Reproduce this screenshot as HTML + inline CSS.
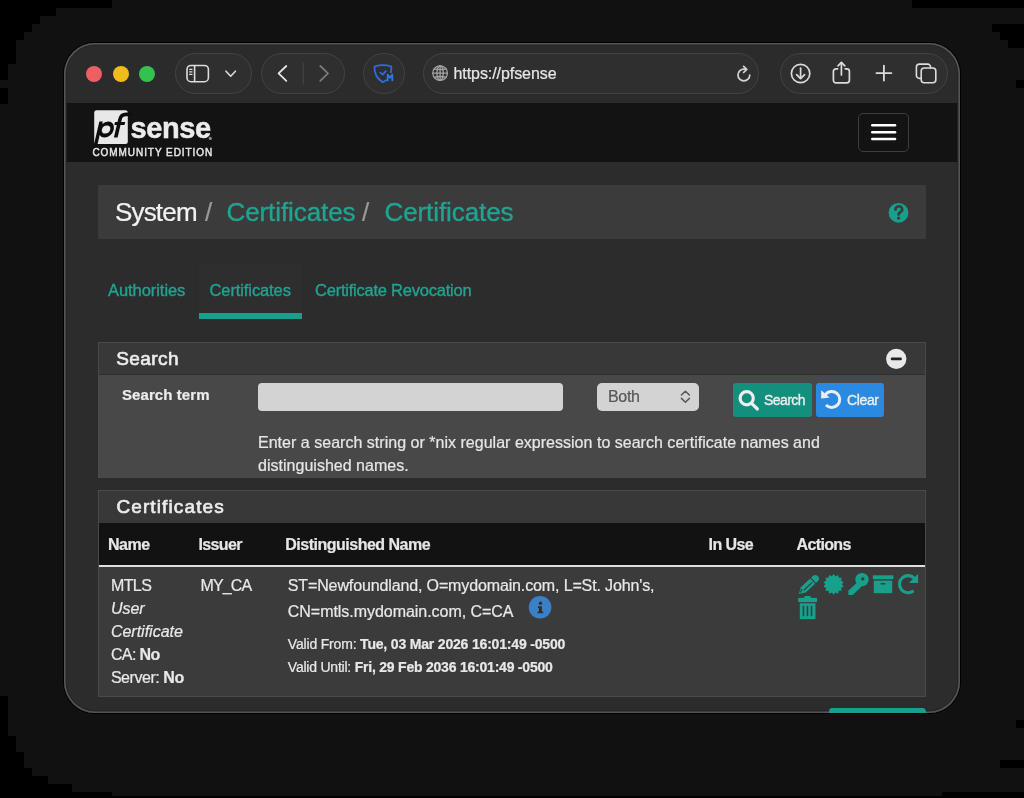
<!DOCTYPE html>
<html><head><meta charset="utf-8">
<style>
*{margin:0;padding:0;box-sizing:border-box}
html,body{width:1024px;height:798px;overflow:hidden;background:#111;font-family:"Liberation Sans",sans-serif}
.blk{position:absolute;background:#000}
#win{position:absolute;left:64px;top:43px;width:896px;height:670px;border-radius:31px;overflow:hidden;background:#2c2c2c}
#winborder{position:absolute;left:64px;top:43px;width:896px;height:670px;border-radius:31px;box-shadow:inset 0 0 0 1.6px #555,inset 0 0 0 2.8px #262626,0 0 0 1px #000;pointer-events:none}
.r{position:absolute}
.t{position:absolute;white-space:nowrap;line-height:1;-webkit-text-stroke:0.22px currentColor}
.pill{position:absolute;top:53px;height:41px;border-radius:21px;border:1px solid #434343;background:#2f2f2f}
.dot{position:absolute;top:65.5px;width:16.4px;height:16.4px;border-radius:50%}
.teal{color:#20a492;-webkit-text-stroke:0.35px #20a492}
.wt{color:#e8e8e8}
svg{position:absolute;left:0;top:0;overflow:visible}
</style></head><body>
<!-- background shadow blocks -->
<div class="blk" style="left:0;top:0;width:112px;height:8px"></div>
<div class="blk" style="left:0;top:8px;width:56px;height:8px"></div>
<div class="blk" style="left:0;top:16px;width:40px;height:8px"></div>
<div class="blk" style="left:0;top:24px;width:32px;height:8px"></div>
<div class="blk" style="left:0;top:32px;width:24px;height:8px"></div>
<div class="blk" style="left:0;top:40px;width:16px;height:24px"></div>
<div class="blk" style="left:0;top:64px;width:8px;height:16px"></div>
<div class="blk" style="left:0;top:88px;width:8px;height:16px"></div>
<div class="blk" style="left:912px;top:0;width:112px;height:8px"></div>
<div class="blk" style="left:992px;top:24px;width:32px;height:8px"></div>
<div class="blk" style="left:1000px;top:32px;width:24px;height:8px"></div>
<div class="blk" style="left:1008px;top:40px;width:16px;height:8px"></div>
<div class="blk" style="left:1016px;top:80px;width:8px;height:8px"></div>
<div class="blk" style="left:0;top:696px;width:8px;height:102px"></div>
<div class="blk" style="left:8px;top:736px;width:8px;height:62px"></div>
<div class="blk" style="left:16px;top:752px;width:8px;height:46px"></div>
<div class="blk" style="left:24px;top:768px;width:8px;height:30px"></div>
<div class="blk" style="left:32px;top:776px;width:16px;height:22px"></div>
<div class="blk" style="left:48px;top:784px;width:24px;height:14px"></div>
<div class="blk" style="left:72px;top:792px;width:40px;height:6px"></div>
<div class="blk" style="left:112px;top:796px;width:830px;height:2px"></div>
<div class="blk" style="left:942px;top:792px;width:82px;height:6px"></div>
<div class="blk" style="left:1016px;top:720px;width:8px;height:8px"></div>
<div class="blk" style="left:1000px;top:760px;width:24px;height:8px"></div>

<div id="win"></div>
<!-- everything below in absolute page coords, clipped by clip container -->
<div style="position:absolute;left:64px;top:43px;width:896px;height:670px;border-radius:31px;overflow:hidden">
<div style="position:absolute;left:-64px;top:-43px;width:1024px;height:798px;will-change:transform">
  <!-- toolbar -->
  <div class="r" style="left:64px;top:43px;width:896px;height:60px;background:#2b2b2b"></div>
  <div class="dot" style="left:86px;background:#ed5f61"></div>
  <div class="dot" style="left:112.6px;background:#efbb1d"></div>
  <div class="dot" style="left:139.1px;background:#34c14f"></div>
  <div class="pill" style="left:175px;width:77px"></div>
  <div class="pill" style="left:261px;width:84px"></div>
  <div class="pill" style="left:363px;width:42px"></div>
  <div class="pill" style="left:423px;width:336px"></div>
  <div class="pill" style="left:780px;width:168px"></div>
  <div class="t" style="left:453.5px;top:65.7px;font-size:16px;color:#e6e6e6;letter-spacing:-0.07px">https://pfsense</div>

  <!-- navbar -->
  <div class="r" style="left:64px;top:103px;width:896px;height:59px;background:#131313"></div>

  <svg width="1024" height="798" style="left:0;top:0">
   <rect x="94.2" y="110.3" width="33.6" height="33.6" rx="2.5" fill="#e8e8e8"/>
   <g transform="translate(0,137.6) skewX(-13) translate(0,-137.6)" fill="#0d0d0d">
    <path fill-rule="evenodd" d="M95.6 121.4 H99.1 V124 A7.4 8.1 0 1 1 99.1 135 V148 H95.6 Z M104.2 125.4 A4.2 4.1 0 1 0 104.2 133.6 A4.2 4.1 0 1 0 104.2 125.4 Z"/>
    <path d="M113.9 137.6 V119 Q113.9 112.6 120.5 112.6 H126 V116.2 H121 Q117.6 116.2 117.6 119.5 V137.6 Z"/>
    <path d="M111.4 121.9 H121.6 V125 H111.4 Z"/>
   </g>
   <circle cx="210.3" cy="138.4" r="1.6" fill="#888"/>
  </svg>
  <div class="t" style="left:130.6px;top:113.65px;font-size:29px;font-weight:bold;color:#ececec;letter-spacing:-0.4px;-webkit-text-stroke:0.5px #ececec;transform:scaleY(1.04);transform-origin:0 24.55px">sense</div>
  <div class="t" style="left:92.4px;top:148px;font-size:10px;color:#e6e6e6;letter-spacing:0.94px;-webkit-text-stroke:0.45px #e6e6e6;transform:scaleY(1.1);transform-origin:0 8.465px">COMMUNITY EDITION</div>
  <div class="r" style="left:858px;top:113px;width:51px;height:39px;border:1px solid #3d3d3d;border-radius:5px"></div>

  <!-- page -->
  <div class="r" style="left:64px;top:162px;width:896px;height:560px;background:#2c2c2c"></div>
  <div class="r" style="left:98px;top:185px;width:828px;height:54px;background:#3b3b3b"></div>
  <div class="t" style="left:115px;top:198.7px;font-size:26px;color:#f2f2f2;letter-spacing:-0.83px">System</div>
  <div class="t" style="left:205px;top:198.7px;font-size:26px;color:#9a9a9a">/</div>
  <div class="t teal" style="left:226.5px;top:198.7px;font-size:26px;letter-spacing:-0.09px">Certificates</div>
  <div class="t" style="left:362px;top:198.7px;font-size:26px;color:#9a9a9a">/</div>
  <div class="t teal" style="left:384.5px;top:198.7px;font-size:26px;letter-spacing:-0.09px">Certificates</div>


  <svg width="1024" height="798" style="left:0;top:0">
   <circle cx="898.55" cy="212.85" r="9.9" fill="#17a08c"/>
   <path d="M895.6 209.6 A3.3 3 0 1 1 900.4 212 Q898.6 212.9 898.6 214.6" fill="none" stroke="#3a3a3a" stroke-width="2.6" stroke-linecap="round"/>
   <circle cx="898.6" cy="218.1" r="1.6" fill="#3a3a3a"/>
  </svg>
  <!-- tabs -->
  <div class="r" style="left:199px;top:264px;width:103px;height:54px;background:#2e2e2e"></div>
  <div class="r" style="left:199px;top:312.5px;width:103px;height:6px;background:#17a08d"></div>
  <div class="t teal" style="left:108px;top:281.6px;font-size:16.5px;letter-spacing:-0.06px">Authorities</div>
  <div class="t teal" style="left:209.5px;top:281.6px;font-size:16.5px;letter-spacing:-0.1px">Certificates</div>
  <div class="t teal" style="left:315px;top:281.6px;font-size:16.5px;letter-spacing:-0.23px">Certificate Revocation</div>

  <!-- search panel -->
  <div class="r" style="left:98px;top:341.5px;width:828px;height:136.5px;background:#484848;border:1px solid #4a4a4a"></div>
  <div class="r" style="left:99px;top:342.5px;width:826px;height:32.5px;background:#383838"></div>
  <div class="r" style="left:99px;top:373.6px;width:826px;height:1.2px;background:#2f2f2f"></div>
  <div class="t" style="left:116.2px;top:348.6px;font-size:19px;color:#ececec;letter-spacing:0.45px;-webkit-text-stroke:0.65px #ececec">Search</div>

  <svg width="1024" height="798" style="left:0;top:0">
   <circle cx="896.25" cy="358.85" r="10.2" fill="#e9e9e9"/>
   <rect x="890.8" y="357.6" width="11" height="2.7" rx="1" fill="#222"/>
  </svg>
  <div class="t" style="left:122px;top:387.1px;font-size:15px;font-weight:bold;color:#ececec;letter-spacing:0.08px">Search term</div>
  <div class="r" style="left:258px;top:383px;width:304.5px;height:27.5px;background:#d3d3d3;border-radius:4px"></div>
  <div class="r" style="left:597px;top:383px;width:101.5px;height:27.5px;background:#d3d3d3;border-radius:5px"></div>
  <div class="t" style="left:608px;top:388.5px;font-size:16px;color:#575757;letter-spacing:-0.31px">Both</div>
  <div class="r" style="left:733px;top:383px;width:79px;height:34px;background:#138f7e;border-radius:3px"></div>
  <div class="t" style="left:764px;top:392.8px;font-size:14px;color:#eeeeee;letter-spacing:-0.55px;-webkit-text-stroke:0.35px #eeeeee">Search</div>
  <div class="r" style="left:816.3px;top:383px;width:68px;height:34px;background:#2a8ae2;border-radius:3px"></div>
  <div class="t" style="left:847px;top:392.8px;font-size:14px;color:#eeeeee;letter-spacing:-0.36px;-webkit-text-stroke:0.35px #eeeeee">Clear</div>

  <svg width="1024" height="798" style="left:0;top:0">
   <!-- select chevrons -->
   <polyline points="681.4,395 685.4,391.2 689.4,395" fill="none" stroke="#575757" stroke-width="1.5" stroke-linecap="round" stroke-linejoin="round"/>
   <polyline points="681.4,398.4 685.4,402.2 689.4,398.4" fill="none" stroke="#575757" stroke-width="1.5" stroke-linecap="round" stroke-linejoin="round"/>
   <!-- magnifier -->
   <circle cx="746.7" cy="398.2" r="6.6" fill="none" stroke="#eeeeee" stroke-width="3.2"/>
   <line x1="751.6" y1="403.4" x2="757.4" y2="409" stroke="#eeeeee" stroke-width="3.2" stroke-linecap="round"/>
   <!-- undo -->
   <path d="M825.4 394.5 A8 8 0 1 1 826 405" fill="none" stroke="#eeeeee" stroke-width="3"/>
   <path d="M821.2 390.2 L829.6 397.6 L821.2 398.6 Z" fill="#eeeeee"/>
  </svg>
  <div class="t" style="left:258px;top:435px;font-size:16px;color:#e6e6e6;letter-spacing:0.02px">Enter a search string or *nix regular expression to search certificate names and</div>
  <div class="t" style="left:258px;top:457.7px;font-size:16px;color:#e6e6e6;letter-spacing:0.02px">distinguished names.</div>

  <!-- certificates panel -->
  <div class="r" style="left:98px;top:490px;width:828px;height:206.5px;background:#3b3b3b;border:1px solid #4a4a4a"></div>
  <div class="r" style="left:99px;top:491px;width:826px;height:32px;background:#383838"></div>
  <div class="t" style="left:116.4px;top:496.7px;font-size:19px;color:#ececec;letter-spacing:1.12px;-webkit-text-stroke:0.65px #ececec">Certificates</div>
  <div class="r" style="left:99px;top:523px;width:826px;height:41.5px;background:#121212"></div>
  <div class="r" style="left:99px;top:564.5px;width:826px;height:2.5px;background:#dedede"></div>
  <div class="t" style="left:108px;top:536.8px;font-size:16px;font-weight:bold;color:#e6e6e6;letter-spacing:-0.44px">Name</div>
  <div class="t" style="left:198.4px;top:536.8px;font-size:16px;font-weight:bold;color:#e6e6e6;letter-spacing:-0.62px">Issuer</div>
  <div class="t" style="left:285.3px;top:536.8px;font-size:16px;font-weight:bold;color:#e6e6e6;letter-spacing:-0.5px">Distinguished Name</div>
  <div class="t" style="left:708.6px;top:536.8px;font-size:16px;font-weight:bold;color:#e6e6e6;letter-spacing:-0.59px">In Use</div>
  <div class="t" style="left:796.6px;top:536.8px;font-size:16px;font-weight:bold;color:#e6e6e6;letter-spacing:-0.65px">Actions</div>

  <div class="t wt" style="left:110.9px;top:578.2px;font-size:16px;letter-spacing:-0.56px">MTLS</div>
  <div class="t wt" style="left:110.9px;top:601.2px;font-size:16px;font-style:italic">User</div>
  <div class="t wt" style="left:110.9px;top:624.1px;font-size:16px;font-style:italic">Certificate</div>
  <div class="t wt" style="left:110.9px;top:647.1px;font-size:16px;letter-spacing:-0.6px">CA: <b>No</b></div>
  <div class="t wt" style="left:110.9px;top:670.2px;font-size:16px;letter-spacing:-0.45px">Server: <b>No</b></div>
  <div class="t wt" style="left:200.5px;top:578.2px;font-size:16px;letter-spacing:-0.86px">MY_CA</div>
  <div class="t wt" style="left:287.8px;top:578.1px;font-size:16px;letter-spacing:-0.13px">ST=Newfoundland, O=mydomain.com, L=St. John's,</div>
  <div class="t wt" style="left:287.8px;top:603.5px;font-size:16px;letter-spacing:-0.04px">CN=mtls.mydomain.com, C=CA</div>
  <div class="t wt" style="left:287.8px;top:636.9px;font-size:14px;letter-spacing:-0.18px">Valid From: <b>Tue, 03 Mar 2026 16:01:49 -0500</b></div>
  <div class="t wt" style="left:287.8px;top:659.6px;font-size:14px;letter-spacing:-0.22px">Valid Until: <b>Fri, 29 Feb 2036 16:01:49 -0500</b></div>


<svg width="1024" height="798" viewBox="0 0 1024 798" style="left:0;top:0">
 <g fill="none" stroke="#dcdcdc" stroke-linecap="round" stroke-linejoin="round">
  <!-- sidebar icon -->
  <rect x="187" y="65.5" width="21.4" height="16.2" rx="4" stroke-width="1.6"/>
  <line x1="194.6" y1="66" x2="194.6" y2="81.5" stroke-width="1.6"/>
  <line x1="189.6" y1="69.4" x2="192" y2="69.4" stroke-width="1.1"/>
  <line x1="189.6" y1="71.9" x2="192" y2="71.9" stroke-width="1.1"/>
  <line x1="189.6" y1="74.4" x2="192" y2="74.4" stroke-width="1.1"/>
  <polyline points="226,71.2 230.7,76.2 235.4,71.2" stroke-width="1.6"/>
  <!-- back/forward -->
  <polyline points="286.3,66 278.6,73.4 286.3,80.8" stroke-width="1.8" stroke="#e6e6e6"/>
  <polyline points="320.3,66 328,73.4 320.3,80.8" stroke-width="1.8" stroke="#7a7a7a"/>
  <line x1="303.3" y1="62.5" x2="303.3" y2="84.5" stroke-width="1.2" stroke="#444" stroke-linecap="butt"/>
  <!-- globe -->
  <g stroke="#a4a4a4" stroke-width="1.3" transform="translate(0,0.3)">
   <circle cx="440.1" cy="72.8" r="7.3"/>
   <ellipse cx="440.1" cy="72.8" rx="3.2" ry="7.3"/>
   <line x1="440.1" y1="65.5" x2="440.1" y2="80.1"/>
   <line x1="432.8" y1="72.8" x2="447.4" y2="72.8"/>
   <path d="M434 68.6 Q440.1 70.2 446.2 68.6"/>
   <path d="M434 77 Q440.1 75.4 446.2 77"/>
  </g>
  <!-- reload -->
  <path d="M749.75 75 A5.9 5.9 0 1 1 743.85 69.1 H746" stroke-width="1.7" stroke="#d4d4d4"/>
  <polyline points="743.6,66.3 746.8,69.3 743.6,72.5" stroke-width="1.7" stroke="#d4d4d4"/>
  <!-- download -->
  <circle cx="800.6" cy="73.5" r="9.2" stroke-width="1.7"/>
  <line x1="800.6" y1="68.2" x2="800.6" y2="78.2" stroke-width="1.7"/>
  <polyline points="796.6,74.6 800.6,78.6 804.6,74.6" stroke-width="1.7"/>
  <!-- share -->
  <path d="M837.6 68.8 H836 A2.6 2.6 0 0 0 833.4 71.4 V80.2 A2.6 2.6 0 0 0 836 82.8 H846.8 A2.6 2.6 0 0 0 849.4 80.2 V71.4 A2.6 2.6 0 0 0 846.8 68.8 H845.2" stroke-width="1.7"/>
  <line x1="841.4" y1="62.5" x2="841.4" y2="75" stroke-width="1.7"/>
  <polyline points="838,65.8 841.4,62.4 844.8,65.8" stroke-width="1.7"/>
  <!-- plus -->
  <line x1="876.4" y1="73.1" x2="891.4" y2="73.1" stroke-width="1.8"/>
  <line x1="883.9" y1="65.6" x2="883.9" y2="80.6" stroke-width="1.8"/>

  <!-- tabs -->
  <path d="M921.2 78.4 H919.4 A3 3 0 0 1 916.4 75.4 V67.1 A3 3 0 0 1 919.4 64.1 H927.6 A3 3 0 0 1 930.6 67.1 V68" stroke-width="1.6"/>
  <rect x="921.2" y="68" width="14.6" height="14.8" rx="3" stroke-width="1.6"/>
 </g>
 <!-- shield -->
 <g fill="none" stroke="#2b6fd6" stroke-width="1.8" stroke-linecap="round" stroke-linejoin="round">
  <path d="M390.9 72.3 Q391.5 69 391.3 66.5 Q383 63.7 374.5 66.5 Q373.8 76.5 382.7 82.3 Q384.6 81.3 386.2 80.3"/>
  <polyline points="380.3,72.6 382.7,74.6 385.8,71.1"/>
 </g>
 <path d="M387.7 80.4 V74.6 L390 77.8 L392.3 74.6 V80.4" fill="none" stroke="#2f78e2" stroke-width="1.8" stroke-linejoin="round" stroke-linecap="round"/>
 <!-- hamburger -->
 <g stroke="#ffffff" stroke-width="2.6" stroke-linecap="round">
  <line x1="872.3" y1="125.3" x2="895" y2="125.3"/>
  <line x1="872.3" y1="132.2" x2="895" y2="132.2"/>
  <line x1="872.3" y1="139" x2="895" y2="139"/>
 </g>
</svg>


  <svg width="1024" height="798" style="left:0;top:0">
   <!-- info -->
   <circle cx="540.1" cy="607.3" r="11.3" fill="#3a80c6"/>
   <circle cx="540.5" cy="603.2" r="1.7" fill="#2e2e2e"/>
   <path d="M538 606.2 H541.9 V611.4 H543.2 V613.2 H537.6 V611.4 H538.9 V607.9 H538 Z" fill="#2e2e2e"/>
   <g fill="#17a08c">
    <!-- pencil -->
    <g transform="translate(798.9,594) rotate(-43)">
     <path d="M0 0 L6 -3.6 H18.8 V3.6 H6 Z"/>
     <path d="M20 -3.6 H22.4 A3.6 3.6 0 0 1 22.4 3.6 H20 Z"/>
    </g>
    <g transform="translate(798.9,594) rotate(-43)" stroke="#333" stroke-width="1.1" fill="none">
     <line x1="6" y1="0.6" x2="17.6" y2="0.6"/>
     <path d="M2.2 0 L5.4 -1.6" />
    </g>
    <!-- badge -->
    <polygon points="833.60,573.90 835.45,576.21 838.11,574.93 838.77,577.81 841.73,577.82 841.08,580.70 843.74,581.99 841.90,584.30 843.74,586.61 841.08,587.90 841.73,590.78 838.77,590.79 838.11,593.67 835.45,592.39 833.60,594.70 831.75,592.39 829.09,593.67 828.43,590.79 825.47,590.78 826.12,587.90 823.46,586.61 825.30,584.30 823.46,581.99 826.12,580.70 825.47,577.82 828.43,577.81 829.09,574.93 831.75,576.21"/>
    <!-- key -->
    <circle cx="862" cy="579.6" r="6.7"/>
    <path d="M857.2 582.4 L861.6 586.4 L852.8 595 H848.4 V590.4 Z"/>
    <!-- archive -->
    <rect x="872.9" y="575.3" width="20.5" height="3.9"/>
    <rect x="873.8" y="580.6" width="18.4" height="12.6"/>
    <!-- redo arrow head -->
    <polygon points="918.1,573.8 918.1,583 909,583"/>
    <!-- trash -->
    <rect x="798.3" y="597.9" width="18.7" height="4.2"/>
    <rect x="804.2" y="596" width="6.6" height="2.4" rx="1"/>
    <rect x="799.8" y="603.3" width="15.7" height="15.8"/>
   </g>
   <circle cx="862.8" cy="578.9" r="1.7" fill="#3b3b3b"/>
   <rect x="880.5" y="583" width="5" height="1.5" rx="0.7" fill="#3b3b3b"/>
   <path d="M913.6 590.8 A8.6 8.6 0 1 1 914.6 578.6" fill="none" stroke="#17a08c" stroke-width="3.1"/>
   <g fill="#3b3b3b">
    <rect x="802.7" y="605.9" width="1.5" height="10.3"/>
    <rect x="806.7" y="605.9" width="1.5" height="10.3"/>
    <rect x="810.8" y="605.9" width="1.5" height="10.3"/>
   </g>
  </svg>
  <div class="r" style="left:829px;top:708px;width:96px;height:20px;background:#1a9e8b;border-radius:4px"></div>
</div>
</div>
<div id="winborder"></div>
<div style="position:absolute;left:829px;top:708px;width:97px;height:4.8px;border-radius:4px 4px 0 0;background:#17a08e"></div>
</body></html>
